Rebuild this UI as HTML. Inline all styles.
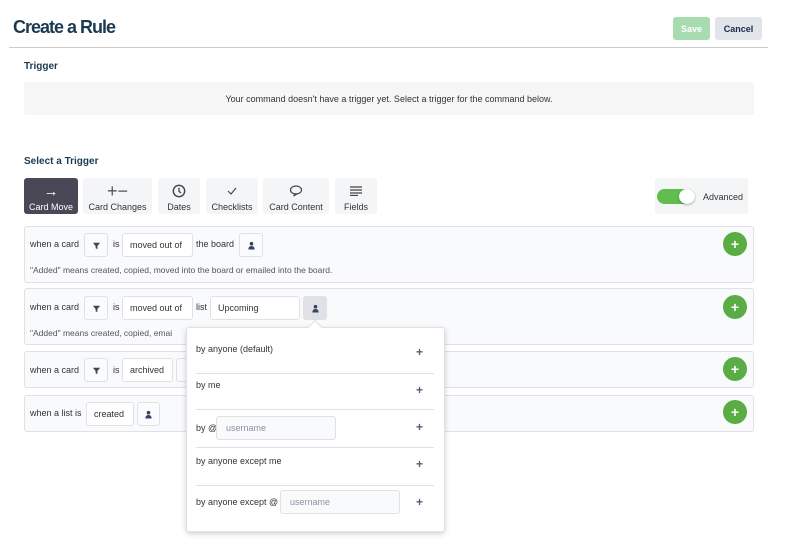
<!DOCTYPE html>
<html><head><style>
*{box-sizing:border-box;margin:0;padding:0}
body{width:797px;height:550px;background:#fff;font-family:"Liberation Sans",sans-serif;color:#172b4d;position:relative;overflow:hidden}
.a{position:absolute}
.t{font-size:9px;color:#333}
.box{position:absolute;border:1px solid #dfe1e6;border-radius:3px;background:#fff;font-size:9px;color:#333;display:flex;align-items:center;padding-left:7px}
.ic{position:absolute;border:1px solid #dfe1e6;border-radius:3px;background:#fafbfc;display:flex;align-items:center;justify-content:center}
.row{position:absolute;left:24px;width:730px;border:1px solid #dfe1e6;border-radius:3px;background:#f9fafc}
.plus{position:absolute;left:723px;width:24px;height:24px;border-radius:50%;background:#5aac44;color:#fff;font-weight:bold;font-size:14px;display:flex;align-items:center;justify-content:center}
.tab{position:absolute;top:178px;height:36px;background:#f4f5f7;border-radius:3px;font-size:9px;color:#333;text-align:center}
.tab .g{height:24px;padding-top:2px;display:flex;align-items:center;justify-content:center;font-size:15px}
.sep{position:absolute;left:196px;width:238px;border-top:1px solid #dfe1e6}
.pp{position:absolute;left:416px;font-size:12px;color:#505f79;font-weight:bold}
.in{position:absolute;border:1px solid #dfe1e6;border-radius:3px;background:#f9fafc;font-size:9px;color:#8993a4;padding-left:9px;display:flex;align-items:center}
</style></head><body>
<div class="a" style="left:13px;top:17px;font-size:18px;font-weight:bold;letter-spacing:-1px;color:#1c3a4f">Create a Rule</div>
<div class="a" style="left:673px;top:17px;width:37px;height:23px;background:#a9dbb0;border-radius:3px;color:#fff;font-size:9px;font-weight:bold;display:flex;align-items:center;justify-content:center">Save</div>
<div class="a" style="left:715px;top:17px;width:47px;height:23px;background:#e1e4e8;border-radius:3px;color:#172b4d;font-size:9px;font-weight:bold;display:flex;align-items:center;justify-content:center">Cancel</div>
<div class="a" style="left:9px;top:47px;width:759px;border-top:1px solid #ccc"></div>
<div class="a" style="left:24px;top:61px;font-size:10px;font-weight:bold;color:#1c3a4f">Trigger</div>
<div class="a" style="left:24px;top:82px;width:730px;height:33px;background:#f6f6f7;border-radius:3px;font-size:9px;color:#333;display:flex;align-items:center;justify-content:center">Your command doesn't have a trigger yet. Select a trigger for the command below.</div>
<div class="a" style="left:24px;top:156px;font-size:10px;font-weight:bold;color:#1c3a4f">Select a Trigger</div>

<div class="tab" style="left:24px;width:54px;background:#4a4757;color:#fff"><div class="g" style="color:#fff">&#8594;</div>Card Move</div>
<div class="tab" style="left:83px;width:69px"><div class="g" style="font-size:18px;color:#555">+&#8722;</div>Card Changes</div>
<div class="tab" style="left:158px;width:42px"><div class="g"><svg width="14" height="14" viewBox="0 0 14 14"><circle cx="7" cy="7" r="5.7" fill="none" stroke="#444" stroke-width="1.4"/><path d="M7 3.8V7.3L9 9" fill="none" stroke="#444" stroke-width="1.3"/></svg></div>Dates</div>
<div class="tab" style="left:206px;width:52px"><div class="g"><svg width="10" height="8" viewBox="0 0 10 8"><path d="M1 4L4 7L9 1" fill="none" stroke="#444" stroke-width="1.1"/></svg></div>Checklists</div>
<div class="tab" style="left:263px;width:66px"><div class="g"><svg width="14" height="12" viewBox="0 0 14 12"><path d="M7 1C3.7 1 1.5 2.8 1.5 5c0 2.2 2.2 3.8 5 3.8L4.5 11 8.3 8.8C11 8.4 12.5 6.8 12.5 5 12.5 2.8 10.3 1 7 1z" fill="none" stroke="#444" stroke-width="1.2"/></svg></div>Card Content</div>
<div class="tab" style="left:335px;width:42px"><div class="g"><svg width="12" height="10" viewBox="0 0 12 10"><path d="M0 1H12M0 4H12M0 7H12M0 9.5H8" stroke="#444" stroke-width="1.2"/></svg></div>Fields</div>

<div class="a" style="left:655px;top:178px;width:93px;height:36px;background:#f4f5f7;border-radius:3px"></div>
<div class="a" style="left:657px;top:189px;width:38px;height:15px;background:#61bd4f;border-radius:8px"></div>
<div class="a" style="left:679px;top:189px;width:16px;height:15px;background:#fff;border-radius:50%;box-shadow:0 1px 2px rgba(0,0,0,.3)"></div>
<div class="a t" style="left:703px;top:192px">Advanced</div>

<svg width="0" height="0" style="position:absolute"><defs>
<symbol id="f" viewBox="0 0 10 10"><path d="M1 2H9L6 5.5V9L4 8V5.5Z" fill="#444"/></symbol>
<symbol id="p" viewBox="0 0 10 10"><circle cx="5" cy="3" r="2" fill="#344563"/><path d="M1.5 9.5Q1.5 5.5 5 5.5Q8.5 5.5 8.5 9.5Z" fill="#344563"/></symbol>
</defs></svg>

<div class="row" style="top:226px;height:57px"></div>
<div class="a t" style="left:30px;top:239px">when a card</div>
<div class="ic" style="left:84px;top:233px;width:24px;height:24px"><svg width="9" height="9"><use href="#f"/></svg></div>
<div class="a t" style="left:113px;top:239px">is</div>
<div class="box" style="left:122px;top:233px;width:71px;height:24px">moved out of</div>
<div class="a t" style="left:196px;top:239px">the board</div>
<div class="ic" style="left:239px;top:233px;width:24px;height:24px"><svg width="9" height="9"><use href="#p"/></svg></div>
<div class="a" style="left:30px;top:265px;font-size:8.5px;color:#555">"Added" means created, copied, moved into the board or emailed into the board.</div>
<div class="plus" style="top:232px">+</div>

<div class="row" style="top:288px;height:57px"></div>
<div class="a t" style="left:30px;top:302px">when a card</div>
<div class="ic" style="left:84px;top:296px;width:24px;height:24px"><svg width="9" height="9"><use href="#f"/></svg></div>
<div class="a t" style="left:113px;top:302px">is</div>
<div class="box" style="left:122px;top:296px;width:71px;height:24px">moved out of</div>
<div class="a t" style="left:196px;top:302px">list</div>
<div class="box" style="left:210px;top:296px;width:90px;height:24px">Upcoming</div>
<div class="ic" style="left:303px;top:296px;width:24px;height:24px;background:#dfe1e6"><svg width="9" height="9"><use href="#p"/></svg></div>
<div class="a" style="left:30px;top:328px;font-size:8.5px;color:#555">"Added" means created, copied, emai</div>
<div class="plus" style="top:295px">+</div>

<div class="row" style="top:351px;height:37px"></div>
<div class="a t" style="left:30px;top:365px">when a card</div>
<div class="ic" style="left:84px;top:358px;width:24px;height:24px"><svg width="9" height="9"><use href="#f"/></svg></div>
<div class="a t" style="left:113px;top:365px">is</div>
<div class="box" style="left:122px;top:358px;width:51px;height:24px">archived</div>
<div class="ic" style="left:176px;top:358px;width:24px;height:24px"></div>
<div class="plus" style="top:357px">+</div>

<div class="row" style="top:395px;height:37px"></div>
<div class="a t" style="left:30px;top:408px">when a list is</div>
<div class="box" style="left:86px;top:402px;width:48px;height:24px">created</div>
<div class="ic" style="left:137px;top:402px;width:23px;height:24px"><svg width="9" height="9"><use href="#p"/></svg></div>
<div class="plus" style="top:400px">+</div>

<div class="a" style="left:186px;top:327px;width:259px;height:205px;background:#fff;border:1px solid #dfe1e6;border-radius:3px;box-shadow:0 2px 6px rgba(0,0,0,.18)"></div>
<div class="a" style="left:310px;top:322px;width:10px;height:10px;background:#fff;border-left:1px solid #dfe1e6;border-top:1px solid #dfe1e6;transform:rotate(45deg)"></div>
<div class="a t" style="left:196px;top:344px">by anyone (default)</div><div class="pp" style="top:345px">+</div>
<div class="sep" style="top:373px"></div>
<div class="a t" style="left:196px;top:380px">by me</div><div class="pp" style="top:383px">+</div>
<div class="sep" style="top:409px"></div>
<div class="a t" style="left:196px;top:423px">by @</div><div class="in" style="left:216px;top:416px;width:120px;height:24px">username</div><div class="pp" style="top:420px">+</div>
<div class="sep" style="top:447px"></div>
<div class="a t" style="left:196px;top:456px">by anyone except me</div><div class="pp" style="top:457px">+</div>
<div class="sep" style="top:485px"></div>
<div class="a t" style="left:196px;top:497px">by anyone except @</div><div class="in" style="left:280px;top:490px;width:120px;height:24px">username</div><div class="pp" style="top:495px">+</div>
</body></html>
